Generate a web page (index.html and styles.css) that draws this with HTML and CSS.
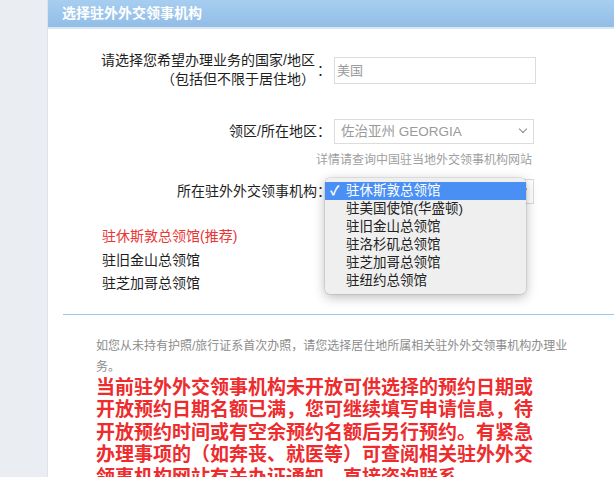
FILE: index.html
```html
<!DOCTYPE html>
<html lang="zh">
<head>
<meta charset="utf-8">
<title>选择驻外外交领事机构</title>
<link rel="stylesheet" href="styles.css">
</head>
<body>
<div class="page">
  <div class="side"></div>
  <div class="main">
    <div class="header">选择驻外外交领事机构</div>
    <div class="row row1">
      <div class="label two">
        <div class="ltext">请选择您希望办理业务的国家/地区<br>（包括但不限于居住地）</div>
        <span class="colon">：</span>
      </div>
      <div class="input">美国</div>
    </div>
    <div class="row row2">
      <div class="label">领区/所在地区：</div>
      <div class="select">佐治亚州 GEORGIA<span class="chev"></span></div>
    </div>
    <div class="hint">详情请查询中国驻当地外交领事机构网站</div>
    <div class="row row3">
      <div class="label">所在驻外外交领事机构：</div>
      <div class="select"><span class="chev"></span></div>
      <div class="popup">
        <div class="opt sel"><span class="check">✓</span>驻休斯敦总领馆</div>
        <div class="opt">驻美国使馆(华盛顿)</div>
        <div class="opt">驻旧金山总领馆</div>
        <div class="opt">驻洛杉矶总领馆</div>
        <div class="opt">驻芝加哥总领馆</div>
        <div class="opt">驻纽约总领馆</div>
      </div>
    </div>
    <ul class="list">
      <li class="rec">驻休斯敦总领馆(推荐)</li>
      <li>驻旧金山总领馆</li>
      <li>驻芝加哥总领馆</li>
    </ul>
    <div class="divider"></div>
    <p class="note">如您从未持有护照/旅行证系首次办照，请您选择居住地所属相关驻外外交领事机构办理业务。</p>
    <p class="warn">当前驻外外交领事机构未开放可供选择的预约日期或开放预约日期名额已满，您可继续填写申请信息，待开放预约时间或有空余预约名额后另行预约。有紧急办理事项的（如奔丧、就医等）可查阅相关驻外外交领事机构网站有关办证通知，直接咨询联系。</p>
  </div>
</div>
</body>
</html>
```

FILE: styles.css
```css
html, body {
  margin: 0;
  padding: 0;
  height: 100%;
  overflow: hidden;
}
body {
  font-family: "Liberation Sans", "Noto Sans CJK SC", sans-serif;
  color: #222;
  background: #fff;
}
.page {
  display: flex;
  height: 477px;
}
.side {
  width: 47px;
  flex: none;
  background: #eaeef3;
  border-right: 1px solid #dde3ea;
}
.main {
  flex: 1;
  background: #fff;
  position: relative;
}
.header {
  height: 27px;
  line-height: 26px;
  padding-left: 14px;
  color: #fff;
  font-weight: 700;
  font-size: 14px;
  background: linear-gradient(#a7cef0, #92bde6);
  border-bottom: 2px solid #dbe7f2;
}
.row {
  display: flex;
  align-items: center;
}
.row1 { margin-top: 22px; }
.row2 { margin-top: 30px; }
.row3 { margin-top: 10px; position: relative; }
.label {
  width: 283px;
  flex: none;
  text-align: right;
  font-size: 14px;
  line-height: 19px;
  color: #1e1e1e;
}
.label.two {
  display: flex;
  justify-content: flex-end;
  align-items: center;
}
.ltext { text-align: right; }
.colon {
  width: 14px;
  flex: none;
  text-align: left;
  margin-left: 2px;
}
.input {
  margin-left: 3px;
  width: 198px;
  height: 25px;
  border: 1px solid #dcdcdc;
  color: #9a9a9a;
  font-size: 13px;
  line-height: 25px;
  padding-left: 2px;
}
.select {
  margin-left: 3px;
  width: 192px;
  height: 23px;
  border: 1px solid #dcdcdc;
  color: #9a9a9a;
  font-size: 13.5px;
  line-height: 23px;
  padding-left: 6px;
  position: relative;
}
.chev {
  position: absolute;
  right: 7px;
  top: 6px;
  width: 5px;
  height: 5px;
  border-right: 1.5px solid #888;
  border-bottom: 1.5px solid #888;
  transform: rotate(45deg);
}
.hint {
  width: 484px;
  text-align: right;
  font-size: 12px;
  line-height: 17px;
  color: #a0a0a0;
  margin-top: 8px;
}
.popup {
  position: absolute;
  left: 277px;
  top: -1px;
  width: 201px;
  padding: 4px 0;
  background: #efefef;
  border-radius: 5px;
  box-shadow: 0 3px 12px rgba(0,0,0,0.28), 0 0 0 0.5px rgba(0,0,0,0.15);
  z-index: 5;
}
.opt {
  height: 18px;
  line-height: 18px;
  font-size: 13.5px;
  color: #222;
  padding-left: 21px;
  position: relative;
}
.opt.sel {
  background: #4a8ff3;
  color: #fff;
}
.check {
  position: absolute;
  left: 5px;
  top: 0;
  font-size: 13px;
  font-weight: 700;
}
.list {
  list-style: none;
  margin: 21px 0 0;
  padding: 0 0 0 54px;
  font-size: 14px;
  line-height: 23.5px;
  color: #1e1e1e;
}
.list .rec { color: #ea3535; }
.divider {
  margin: 18px 0 0 15px;
  height: 1px;
  background: #9cc6ec;
}
.note {
  margin: 21px 0 0 48px;
  width: 482px;
  font-size: 12px;
  line-height: 21px;
  color: #8c8c8c;
}
.warn {
  margin: -1px 0 0 48px;
  width: 445px;
  font-size: 19px;
  line-height: 22.5px;
  font-weight: 700;
  color: #ee2b2d;
}
```
